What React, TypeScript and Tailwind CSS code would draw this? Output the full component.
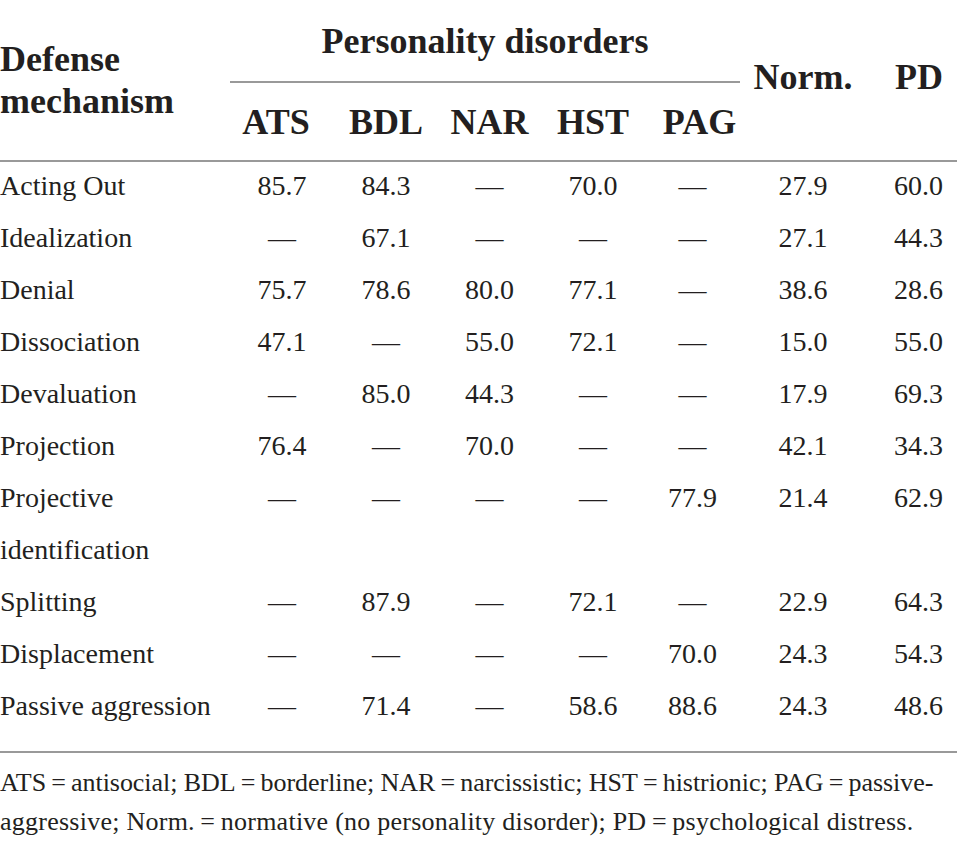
import React from 'react';

type Row = {
  label: string;
  values: string[];
};

const D = '\u2014';

const rows: Row[] = [
  { label: 'Acting Out', values: ['85.7', '84.3', D, '70.0', D, '27.9', '60.0'] },
  { label: 'Idealization', values: [D, '67.1', D, D, D, '27.1', '44.3'] },
  { label: 'Denial', values: ['75.7', '78.6', '80.0', '77.1', D, '38.6', '28.6'] },
  { label: 'Dissociation', values: ['47.1', D, '55.0', '72.1', D, '15.0', '55.0'] },
  { label: 'Devaluation', values: [D, '85.0', '44.3', D, D, '17.9', '69.3'] },
  { label: 'Projection', values: ['76.4', D, '70.0', D, D, '42.1', '34.3'] },
  { label: 'Projective identification', values: [D, D, D, D, '77.9', '21.4', '62.9'] },
  { label: 'Splitting', values: [D, '87.9', D, '72.1', D, '22.9', '64.3'] },
  { label: 'Displacement', values: [D, D, D, D, '70.0', '24.3', '54.3'] },
  { label: 'Passive aggression', values: [D, '71.4', D, '58.6', '88.6', '24.3', '48.6'] },
];

const grid = 'grid grid-cols-[230px_104px_104px_103px_104px_95px_126px_1fr]';
const subHeads = ['ATS', 'BDL', 'NAR', 'HST', 'PAG'];

export default function App() {
  return (
    <div className="w-[957px] min-h-[841px] bg-white text-[#231f20] font-['Liberation_Serif',serif]">
      {/* Header */}
      <div className={`${grid} font-bold text-[36px] leading-[42px]`}>
        <div className="row-span-2 flex flex-col justify-center">
          <span>Defense</span>
          <span>mechanism</span>
        </div>
        <div className="col-span-5 h-[83px] flex items-center justify-center border-b-2 border-[#999]">
          Personality disorders
        </div>
        <div className="row-span-2 flex items-center justify-center pb-[6px]">Norm.</div>
        <div className="row-span-2 flex items-center justify-end pr-[14px] pb-[6px]">PD</div>
        {subHeads.map((h, i) => (
          <div
            key={h}
            className={`h-[77px] flex items-center justify-center ${i === 0 ? 'pr-[12px]' : ''} ${i === 4 ? 'pl-[14px]' : ''}`}
          >
            {h}
          </div>
        ))}
      </div>

      <div className="border-t-2 border-[#999]" />

      {/* Body */}
      <div className="text-[28px] leading-[52px] pb-[19px] -mt-[2px]">
        {rows.map((r) => (
          <div key={r.label} className={grid}>
            <div className={r.label === 'Projective identification' ? 'pr-[40px]' : 'whitespace-nowrap'}>
              {r.label}
            </div>
            {r.values.map((v, i) => (
              <div key={i} className={i === 6 ? 'text-right pr-[14px]' : 'text-center'}>
                {v}
              </div>
            ))}
          </div>
        ))}
      </div>

      <div className="border-t-2 border-[#999]" />

      {/* Footnote */}
      <div className="pt-[10px] text-[26px] leading-[39px] whitespace-nowrap">
        <p className="tracking-[-0.05px]">ATS{'\u2009'}={'\u2009'}antisocial; BDL{'\u2009'}={'\u2009'}borderline; NAR{'\u2009'}={'\u2009'}narcissistic; HST{'\u2009'}={'\u2009'}histrionic; PAG{'\u2009'}={'\u2009'}passive-</p>
        <p className="tracking-[0.25px]">aggressive; Norm.{'\u2009'}={'\u2009'}normative (no personality disorder); PD{'\u2009'}={'\u2009'}psychological distress.</p>
      </div>
    </div>
  );
}
